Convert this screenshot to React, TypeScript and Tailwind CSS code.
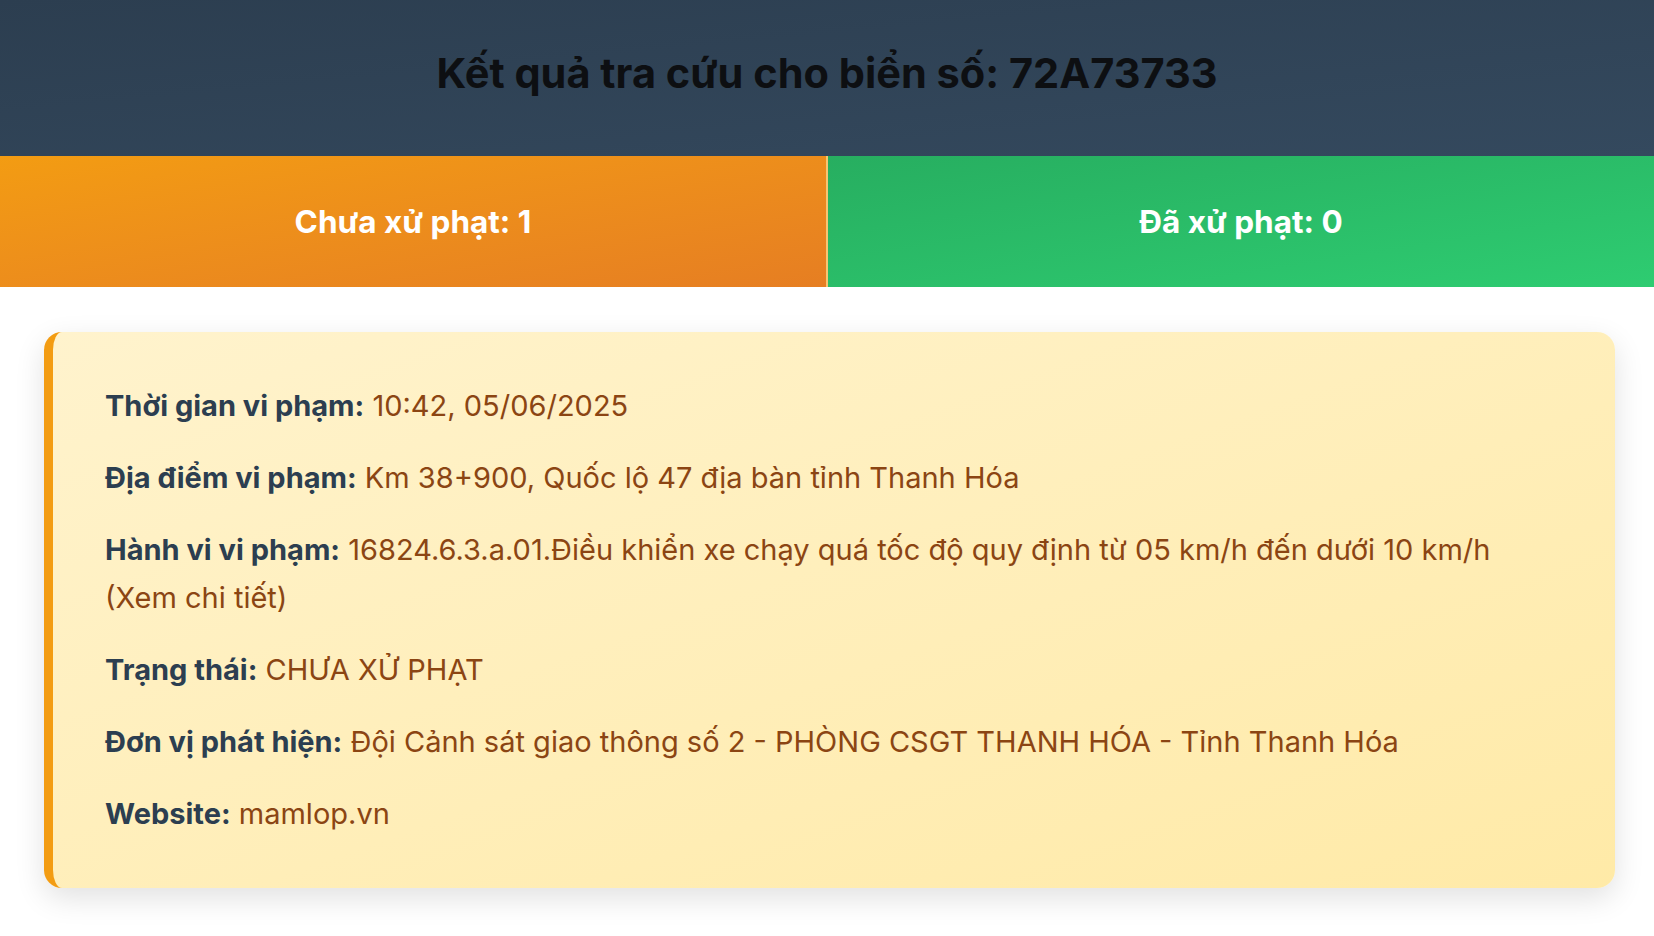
import React from "react";

const rows: { label: string; value: string }[] = [
  { label: "Thời gian vi phạm:", value: "10:42, 05/06/2025" },
  { label: "Địa điểm vi phạm:", value: "Km 38+900, Quốc lộ 47 địa bàn tỉnh Thanh Hóa" },
  {
    label: "Hành vi vi phạm:",
    value: "16824.6.3.a.01.Điều khiển xe chạy quá tốc độ quy định từ 05 km/h đến dưới 10 km/h (Xem chi tiết)",
  },
  { label: "Trạng thái:", value: "CHƯA XỬ PHẠT" },
  { label: "Đơn vị phát hiện:", value: "Đội Cảnh sát giao thông số 2 - PHÒNG CSGT THANH HÓA - Tỉnh Thanh Hóa" },
  { label: "Website:", value: "mamlop.vn" },
];

export default function App() {
  return (
    <div className="min-h-[936px] w-full bg-white font-['Inter','Liberation_Sans',sans-serif]">
      <header className="flex h-[156px] items-center justify-center bg-gradient-to-br from-[#2c3e50] to-[#34495e] pb-[10px]">
        <h1 className="text-[41.5px] font-bold text-[#0d0f12]">
          Kết quả tra cứu cho biển số: 72A73733
        </h1>
      </header>
      <div className="flex h-[131px]">
        <div className="flex flex-1 items-center justify-center border-r-2 border-[#f7c572] bg-gradient-to-br from-[#f39c12] to-[#e67e22]">
          <span className="text-[31.5px] font-bold text-white">Chưa xử phạt: 1</span>
        </div>
        <div className="flex flex-1 items-center justify-center bg-gradient-to-br from-[#27ae60] to-[#2ecc71]">
          <span className="text-[31.5px] font-bold text-white">Đã xử phạt: 0</span>
        </div>
      </div>
      <div className="ml-[44px] mr-[39px] mt-[45px] rounded-[18px] border-l-[9px] border-[#f39c12] bg-gradient-to-br from-[#fff3cd] to-[#ffeaa7] py-[50px] pl-[52px] pr-[48px] shadow-[0_10px_30px_rgba(0,0,0,0.12)]">
        <div className="flex flex-col gap-[24px]">
          {rows.map((r) => (
            <p key={r.label} className="text-[29px] leading-[48px] text-[#8b4513]">
              <span className="font-bold text-[#2c3e50]">{r.label}</span> {r.value}
            </p>
          ))}
        </div>
      </div>
    </div>
  );
}
